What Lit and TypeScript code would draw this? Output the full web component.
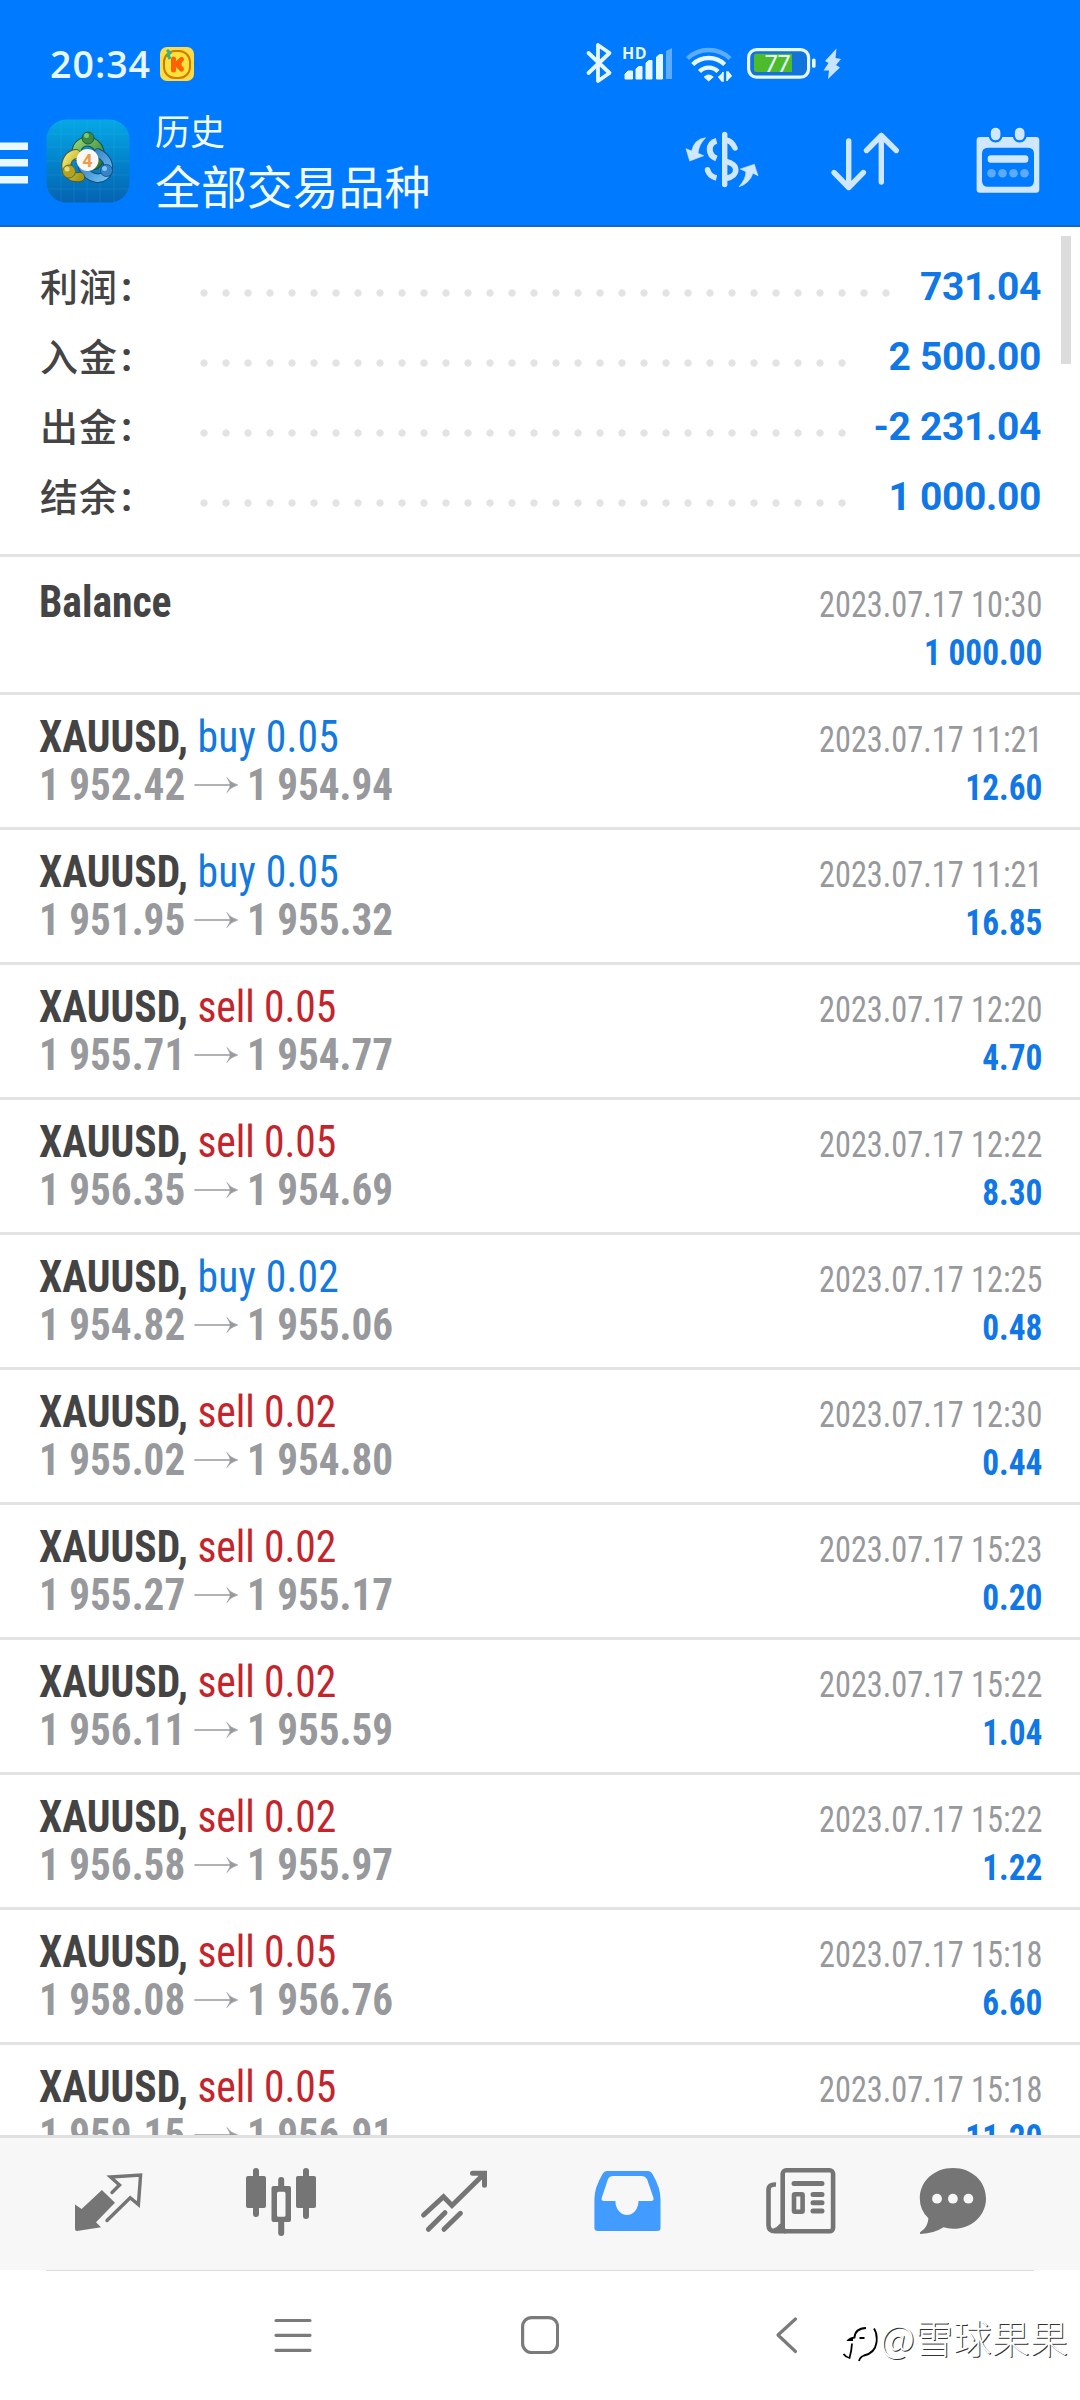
import { LitElement, html, svg, css, nothing } from "lit";
import { customElement, property } from "lit/decorators.js";

interface Deal {
  side: "buy" | "sell";
  volume: string;
  open: string;
  close: string;
  time: string;
  profit: string;
}

const SUMMARY = [
  { label: "利润", value: "731.04", dots: 32 },
  { label: "入金", value: "2 500.00", dots: 30 },
  { label: "出金", value: "-2 231.04", dots: 30 },
  { label: "结余", value: "1 000.00", dots: 30 },
];

const deal = (
  side: "buy" | "sell", volume: string, open: string, close: string, time: string, profit: string,
): Deal => ({ side, volume, open, close, time: `2023.07.17 ${time}`, profit });

const DEALS: Deal[] = [
  deal("buy", "0.05", "1 952.42", "1 954.94", "11:21", "12.60"),
  deal("buy", "0.05", "1 951.95", "1 955.32", "11:21", "16.85"),
  deal("sell", "0.05", "1 955.71", "1 954.77", "12:20", "4.70"),
  deal("sell", "0.05", "1 956.35", "1 954.69", "12:22", "8.30"),
  deal("buy", "0.02", "1 954.82", "1 955.06", "12:25", "0.48"),
  deal("sell", "0.02", "1 955.02", "1 954.80", "12:30", "0.44"),
  deal("sell", "0.02", "1 955.27", "1 955.17", "15:23", "0.20"),
  deal("sell", "0.02", "1 956.11", "1 955.59", "15:22", "1.04"),
  deal("sell", "0.02", "1 956.58", "1 955.97", "15:22", "1.22"),
  deal("sell", "0.05", "1 958.08", "1 956.76", "15:18", "6.60"),
  deal("sell", "0.05", "1 959.15", "1 956.91", "15:18", "11.20"),
];

@customElement("status-bar")
class StatusBar extends LitElement {
  static styles = css`
    :host { display: flex; align-items: center; height: 71px; padding: 28px 0 1px 50px; color: #e6f7ff; }
    .time { font: 600 37.500px/50px "Open Sans", "Noto Sans", sans-serif; width: 110px; white-space: nowrap; letter-spacing: 1px; }
    .badge { display: block; width: 34px; height: 34px; }
    .system { display: block; width: 270px; height: 50px; margin-left: 386px; }
    .hd { font: 700 16px "Open Sans", sans-serif; }
    .level { font: 500 23px Lato, sans-serif; }
  `;
  render() {
    return html`
      <span class="time">20:34</span>
      <svg class="badge" viewBox="0 0 34 34">
        <rect width="34" height="34" rx="7" fill="#ffdc45" />
        <rect x="4" y="4" width="26" height="27" rx="11" fill="#ffe23c" stroke="#d07a00" stroke-width="2" />
        <path d="M13.500 12v11" stroke="#ff6200" stroke-width="5" stroke-linecap="round" />
        <path d="M21.500 12.500L16.500 17l5 5" fill="#ff6200" stroke="#ff6200" stroke-width="5" stroke-linecap="round" stroke-linejoin="round" />
        <path d="M7 3l3 3-2 2 2 4" fill="none" stroke="#2fb58a" stroke-width="3" />
      </svg>
      <svg class="system" viewBox="0 0 270 50">
        <path d="M8.500 14L29.500 34 18 42V6l11.500 8L8.500 34" fill="none" stroke="#e6f7ff" stroke-width="3.800" stroke-linecap="round" stroke-linejoin="round" />
        <text class="hd" x="42" y="20" fill="#e6f7ff" textLength="24.500">HD</text>
        <g fill="#e6f7ff">
          <path d="M45 40v-5l3-3h4.500v8zM56 40V30l2.500-2.500H62V40zM66 40V24l2.500-2.500H72V40zM76.500 40V18l3-2.500h3V40z" stroke="#e6f7ff" stroke-linejoin="round" />
          <path d="M86 40V12l6-3v31z" opacity=".4" />
        </g>
        <g fill="none" stroke="#e6f7ff" stroke-width="4.400">
          <path d="M107.500 19.500A31 31 0 0 1 150 19.500" opacity=".4" />
          <path d="M112.700 25.500A23 23 0 0 1 144.700 25.500" />
          <path d="M119.500 32.500A13 13 0 0 1 138 32.500" />
        </g>
        <path d="M124.200 38Q128.700 34 133.200 38L128.700 42z" fill="#e6f7ff" stroke="#e6f7ff" stroke-linejoin="round" />
        <path d="M143 33v9h-1l-3.500-4.500M147 42v-9h1l3.500 4.500" fill="#e6f7ff" stroke="#e6f7ff" stroke-width="1.600" />
        <rect x="168.600" y="10.600" width="60" height="27.500" rx="8" fill="#1273dc" stroke="#e6f7ff" stroke-width="3.200" />
        <path d="M176 14.700h36V33h-36a2 2 0 0 1-2-2V16.700a2 2 0 0 1 2-2z" fill="#4cbb2c" />
        <text class="level" x="184.500" y="33" fill="#e6f7ff" textLength="26">77</text>
        <rect x="232" y="19.600" width="3.600" height="9.200" rx="1.500" fill="#e6f7ff" />
        <path d="M256.500 9.500L245 22l3.500 2-5 7.500h5.500L248 40l12-11.500-4-2.500 5-6-5.500-1z" fill="#c8e4ff" />
      </svg>
    `;
  }
}

@customElement("app-bar")
class AppBar extends LitElement {
  static styles = css`
    :host { display: flex; align-items: center; height: 125px; padding-right: 36px; color: #f2fbff; }
    svg { display: block; flex: none; }
    .menu { width: 28px; height: 42px; }
    .logo { width: 84px; height: 84px; margin: 0 25px 3px 18px; }
    .titles { flex: 1; padding-bottom: 14px; font-family: "Noto Sans CJK SC", sans-serif; white-space: nowrap; }
    .section { font-size: 35px; line-height: 57px; }
    .filter { font-size: 45.900px; line-height: 52px; }
    .currency { width: 80px; height: 60px; margin-bottom: 5px; }
    .sort { width: 75px; height: 65px; margin: 0 69px 3px 65px; }
    .calendar { width: 72px; height: 74px; margin-bottom: 3px; }
    .four { font: 700 18px Roboto, sans-serif; }
  `;
  render() {
    return html`
      <svg class="menu" viewBox="0 0 28 42" fill="#e9f8ff">
        <path d="M0 .500h28V8H0zM0 17h28v7.500H0zM0 34h28v7.500H0z" />
      </svg>
      <svg class="logo" viewBox="0 0 84 84">
        <defs>
          <linearGradient id="sky" x1="0" y1="0" x2="0" y2="1">
            <stop offset="0" stop-color="#06a8e6" /><stop offset=".5" stop-color="#0284cb" /><stop offset="1" stop-color="#0563b2" />
          </linearGradient>
          <linearGradient id="g" x1="0" y1="0" x2="1" y2="1"><stop offset="0" stop-color="#8ed06c" /><stop offset="1" stop-color="#2b7d33" /></linearGradient>
          <linearGradient id="y" x1="0" y1="0" x2="1" y2="1"><stop offset="0" stop-color="#f0e46a" /><stop offset="1" stop-color="#a39a18" /></linearGradient>
          <linearGradient id="b" x1="0" y1="0" x2="1" y2="1"><stop offset="0" stop-color="#2878bd" /><stop offset="1" stop-color="#6fc0f0" /></linearGradient>
        </defs>
        <rect x=".500" y=".500" width="83" height="83" rx="20" fill="url(#sky)" />
        <path d="M15 1v82M28 1v82M41 1v82M54 1v82M68 1v82M1 15h82M1 28h82M1 42h82M1 56h82M1 70h82" stroke="#6cd0f5" stroke-opacity=".14" />
        <g fill="none" stroke-linecap="round">
          <path d="M31 37C27 19 53 17 54 36Q54 42 49 46" stroke="#1c4f45" stroke-width="10" />
          <path d="M31 37C27 19 53 17 54 36Q54 42 49 46" stroke="url(#g)" stroke-width="8" />
          <path d="M52 34C68 42 64 61 50 59Q42 58 37 49" stroke="#124a78" stroke-width="9.500" />
          <path d="M52 34C68 42 64 61 50 59Q42 58 37 49" stroke="url(#b)" stroke-width="7.500" />
          <path d="M30 35C16 37 17 61 34 58" stroke="#4b5a34" stroke-width="10" />
          <path d="M30 35C16 37 17 61 34 58" stroke="url(#y)" stroke-width="8" />
        </g>
        <circle cx="42" cy="19" r="6" fill="#3b8a44" stroke="#1f5b3d" />
        <circle cx="40.500" cy="16.500" r="2.500" fill="#83c477" />
        <circle cx="23" cy="52.500" r="6.500" fill="#b3a223" stroke="#5f6a28" />
        <circle cx="21" cy="50" r="2.500" fill="#e8dc7a" />
        <circle cx="60.500" cy="51.500" r="6" fill="#3584c9" stroke="#16558f" />
        <circle cx="58.500" cy="49.500" r="2.500" fill="#84c3ee" />
        <circle cx="41.500" cy="41" r="11" fill="#fbf8f4" />
        <text class="four" x="36.300" y="47.500" fill="#ee9a4d">4</text>
      </svg>
      <div class="titles">
        <div class="section">历史</div>
        <div class="filter">全部交易品种</div>
      </div>
      <svg class="currency" viewBox="0 0 80 60" fill="none" stroke="#cfe7ff">
        <path d="M41.700 4.500v50" stroke-width="5.400" stroke-linecap="round" />
        <path d="M43 10Q49 11 52 18" stroke-width="5.400" stroke-linecap="round" />
        <path d="M43 31.500C56 34 56 46 43 48.500" stroke-width="5.600" />
        <path d="M33.500 10.800C24.500 13 24.500 25 33.500 28.500" stroke-width="6" />
        <path d="M24.500 40Q26.500 46.500 33.500 48" stroke-width="5.600" />
        <circle cx="24.500" cy="39.800" r="2.700" fill="#cfe7ff" stroke="none" />
        <path d="M22.700 7.700Q11 9 8.700 21L3 18.700 6.700 31 20.700 25.700 15 23.300Q16 14 22.700 7.700zM56 56.700Q66 54 70 43.300l5 2.400-3.700-11.400-14 4.700 5.700 2.700Q62.700 49.300 56 56.700z" fill="#cfe7ff" stroke="#cfe7ff" stroke-width=".600" stroke-linejoin="round" />
      </svg>
      <svg class="sort" viewBox="0 0 75 65" fill="none" stroke="#cfe7ff" stroke-width="5.400" stroke-linecap="round" stroke-linejoin="round">
        <path d="M20.700 12v46.500M6 43.500l14.700 15 14.700-15M53.300 53V6.500M38.500 21.500l14.800-15 15 15" />
      </svg>
      <svg class="calendar" viewBox="0 0 72 74" fill="#cfe7ff">
        <path fill-rule="evenodd" d="M8 13H64q3.300 0 3.300 3.300V65.400q0 3.300-3.300 3.300H8q-3.400 0-3.400-3.300V16.300Q4.600 13 8 13zM16 23.700q-6 0-6 6v27q0 6 6 6H56q6 0 6-6v-27q0-6-6-6z" />
        <path d="M23.600 8.500v3M47.700 8.500v3" stroke="#007aff" stroke-width="14" stroke-linecap="round" />
        <path d="M23.600 8.500v3M47.700 8.500v3" stroke="#cfe7ff" stroke-width="9.600" stroke-linecap="round" />
        <rect x="15.700" y="31.300" width="40.600" height="7.500" rx="3" />
        <g opacity=".45"><circle cx="19.500" cy="49.300" r="4.300" /><circle cx="30.500" cy="49.300" r="4.300" /><circle cx="41.500" cy="49.300" r="4.300" /><circle cx="52.500" cy="49.300" r="4.300" /></g>
      </svg>
    `;
  }
}

@customElement("account-summary")
class AccountSummary extends LitElement {
  static styles = css`
    :host { display: block; height: 330px; box-sizing: border-box; padding: 25px 39px 0; border-bottom: 3px solid #e3e3e3; }
    .row { display: flex; align-items: center; height: 70px; }
    .label { width: 154px; box-sizing: border-box; flex: none; padding: 0 0 5px 1px; color: #444; font: 500 38px/65px "Noto Sans CJK SC", sans-serif; letter-spacing: 1px; }
    .colon { margin-left: 3px; font: 700 40px/40px Roboto, sans-serif; }
    .dots { height: 8px; margin-top: 12px; background: radial-gradient(circle at 11px 4px, #e3e3e3 3.300px, transparent 4px) 0 0 / 22px 8px repeat-x; }
    .value { margin-left: auto; color: #0f77e6; font: 700 39px/70px Roboto, sans-serif; letter-spacing: -.350px; white-space: nowrap; }
  `;
  render() {
    return SUMMARY.map((s) => html`
      <div class="row">
        <span class="label">${s.label}<span class="colon">:</span></span>
        <span class="dots" style="width:${s.dots * 22}px"></span>
        <span class="value">${s.value}</span>
      </div>`);
  }
}

@customElement("history-row")
class HistoryRow extends LitElement {
  @property({ attribute: false }) deal?: Deal;
  static styles = css`
    :host {
      display: flex; justify-content: space-between; height: 135px; box-sizing: border-box;
      padding: 18px 39px 0; border-bottom: 3px solid #e3e3e3;
      font-family: "Roboto Condensed", Roboto, sans-serif; font-stretch: 75%; white-space: nowrap;
    }
    :host([opening]) { height: 138px; padding-top: 21px; }
    .line { display: flex; align-items: baseline; height: 48px; line-height: 48px; font-size: 44px; transform: scaleX(.945); transform-origin: left; }
    .side { text-align: right; }
    .side .line { justify-content: flex-end; font-size: 36.500px; line-height: 53px; transform-origin: right; }
    .name { font-weight: 700; color: #444; white-space: pre; }
    .buy { color: #1279e0; font-weight: 430; letter-spacing: .200px; }
    .sell { color: #c4242b; font-weight: 430; letter-spacing: -.100px; }
    .line.price { font-weight: 700; color: #97999c; transform: scaleX(.935); }
    .arrow { width: 47px; height: 16px; margin: 0 9px 0 10px; align-self: center; }
    .side .time { color: #97999c; transform: translateX(1px) scaleX(.885); }
    .side .profit { font-weight: 700; color: #0f77e6; transform: translateX(1px) scaleX(.913); }
  `;
  render() {
    const d = this.deal;
    return html`
      <div>
        <div class="line">
          <span class="name">${d ? "XAUUSD, " : "Balance"}</span>
          ${d ? html`<span class=${d.side}>${d.side} ${d.volume}</span>` : nothing}
        </div>
        ${d ? html`<div class="line price">
          <span>${d.open}</span>
          <svg class="arrow" viewBox="0 0 45 16" preserveAspectRatio="none"><path d="M0 8h40" stroke="#97999c" stroke-width="1.500" /><path d="M33.500 .500Q37 6 44.500 8 37 10 33.500 15.500 37 10 37 8 37 6 33.500 .500z" fill="#97999c" stroke="#97999c" stroke-width=".700" /></svg>
          <span>${d.close}</span>
        </div>` : nothing}
      </div>
      <div class="side">
        <div class="line time">${d ? d.time : "2023.07.17 10:30"}</div>
        <div class="line profit">${d ? d.profit : "1 000.00"}</div>
      </div>`;
  }
}

const TABS = [
  svg`<path d="M3 36.500L9.600 41 29.900 22 43 34.700 24 54.300l5 5L5 63q-2 0-2-2z" fill="#757575"/>
    <path d="M40 24.500L47.500 17 38.500 9 68.600 7 66.400 36.500 58.200 29.700 35 52.500" fill="none" stroke="#757575" stroke-width="3.400" stroke-linecap="round"/>`,
  svg`<g fill="#757575"><rect x="1" y="8" width="20" height="32" rx="2"/><rect x="51" y="8" width="20" height="32" rx="2"/>
    <path fill-rule="evenodd" d="M28.500 18H44q2 0 2 2v32q0 2-2 2H28.500q-2 0-2-2V20q0-2 2-2zM33.500 23.700q-1.500 0-1.500 1.500v22q0 1.500 1.500 1.500H39q1.500 0 1.500-1.500v-22q0-1.500-1.500-1.500z"/></g>
    <path d="M11 3v43M61 3v45M36.200 12v8M36.200 53v12" stroke="#757575" stroke-width="6" stroke-linecap="round"/>`,
  svg`<path d="M5.600 47L25.500 28.700 34 37.500 66 6M54.500 5.300h12v12M27 44.700L10.400 61.300M42.400 45.300L26 61.300" fill="none" stroke="#757575" stroke-width="5" stroke-linecap="round"/>`,
  svg`<path fill="#429cff" fill-rule="evenodd" d="M16 3H57Q60 3 62 7 69.500 20 69.500 31V60Q69.500 63 66 63H7Q3.400 63 3.400 60V31Q3.400 20 11 7 13 3 16 3zM22 8Q18.500 8 17 11L10.700 30Q10 33 13 33H24.400A11.500 14 0 0 0 47.500 33H60Q63 33 62.500 30L56 11Q54 8 51 8z"/>`,
  svg`<g fill="none" stroke="#757575"><rect x="18.700" y="2.300" width="50.400" height="61" rx="3.500" stroke-width="4.600"/>
    <path d="M12 16.500Q4.500 16 4.500 22V57Q4.500 63.300 11 63.300H22M9 63.300Q14 62 18 57" stroke-width="4.600"/>
    <path d="M30 15.500H58M49 26.500h9M49 34.700h9M49 43h9" stroke-width="5" stroke-linecap="round"/>
    <rect x="30" y="26.300" width="8.600" height="17.500" rx="1" stroke-width="4.600"/></g>`,
  svg`<path fill="#757575" d="M36 0C55 0 69 13.500 69 30.400S55 60.700 36 60.700Q31 60.700 26.600 59.300 17 65.500 3.500 66 2 65 4 63.500 11 59 11.400 50.300 2.800 42 2.800 30.400C2.800 13.500 17 0 36 0z"/>
    <g fill="#f7f7f7"><circle cx="20" cy="30.700" r="4.900"/><circle cx="35.900" cy="30.700" r="4.900"/><circle cx="51.400" cy="30.700" r="4.900"/></g>`,
];

@customElement("tab-bar")
class TabBar extends LitElement {
  static styles = css`
    :host {
      display: grid; grid-template-columns: repeat(5, 173px) 133px; height: 135px; box-sizing: border-box;
      padding: 30px 0 0 21px; border-top: 3px solid #e0e0e0; background: #f7f7f7;
    }
    .tab { justify-self: center; width: 72px; height: 72px; }
  `;
  render() {
    return TABS.map((t) => html`<svg class="tab" viewBox="0 0 72 72">${t}</svg>`);
  }
}

@customElement("system-nav")
class SystemNav extends LitElement {
  static styles = css`
    :host { position: relative; display: block; height: 130px; background: #fff; }
    .edge { height: 1px; margin: 0 46px; background: #dcdcdc; }
    .keys { display: flex; justify-content: center; gap: 209px; padding-top: 45px; }
    .key { width: 38px; height: 38px; fill: none; stroke: #7b7b7b; stroke-width: 3.200; stroke-linecap: round; stroke-linejoin: round; }
    .mark {
      position: absolute; left: 843px; top: 36px; display: flex; align-items: center; color: #fff;
      font: 300 38.300px/56px "Noto Sans CJK SC", sans-serif; white-space: nowrap; text-shadow: 1px 1px .300px #333;
    }
    .bird { width: 42px; height: 46px; margin: 16px -5px 0 0; }
  `;
  render() {
    return html`
      <div class="edge"></div>
      <div class="keys">
        <svg class="key" viewBox="0 0 38 38"><path d="M2 4.500h34M2 19.300h34M2 34.300h34" /></svg>
        <svg class="key" viewBox="0 0 38 38"><rect x="1.600" y="1.600" width="35" height="35" rx="9" /></svg>
        <svg class="key" viewBox="0 0 38 38"><path d="M27.500 3L10 19l17.500 16.500" /></svg>
      </div>
      <div class="mark">
        <svg class="bird" viewBox="0 0 42 46" fill="none" stroke="#000" stroke-width="1.800">
          <path d="M10 18h-4.500q2-2 6-2.500Q12 6.500 23 6M16.500 16h5M9 21.500q-.500 8-2.500 14.500-4-1-6-4M31 6.500q3.500 5 2.500 14Q32 31 21 33.500q-4 1.500-5 5.500" />
        </svg>
        <span>@雪球果果</span>
      </div>`;
  }
}

@customElement("app-root")
class AppRoot extends LitElement {
  static styles = css`
    :host { display: flex; flex-direction: column; width: 1080px; height: 2400px; overflow: hidden; background: #fff; }
    .header { flex: none; height: 225px; background: #007aff; border-bottom: 2px solid #1668bd; }
    .content { position: relative; flex: 1; min-height: 0; overflow: hidden; }
    .thumb { position: absolute; right: 9px; top: 9px; width: 10px; height: 128px; background: #dcdcdc; }
    tab-bar, system-nav { flex: none; }
  `;
  render() {
    return html`
      <div class="header"><status-bar></status-bar><app-bar></app-bar></div>
      <div class="content">
        <account-summary></account-summary>
        <history-row opening></history-row>
        ${DEALS.map((d) => html`<history-row .deal=${d}></history-row>`)}
        <div class="thumb"></div>
      </div>
      <tab-bar></tab-bar>
      <system-nav></system-nav>`;
  }
}
